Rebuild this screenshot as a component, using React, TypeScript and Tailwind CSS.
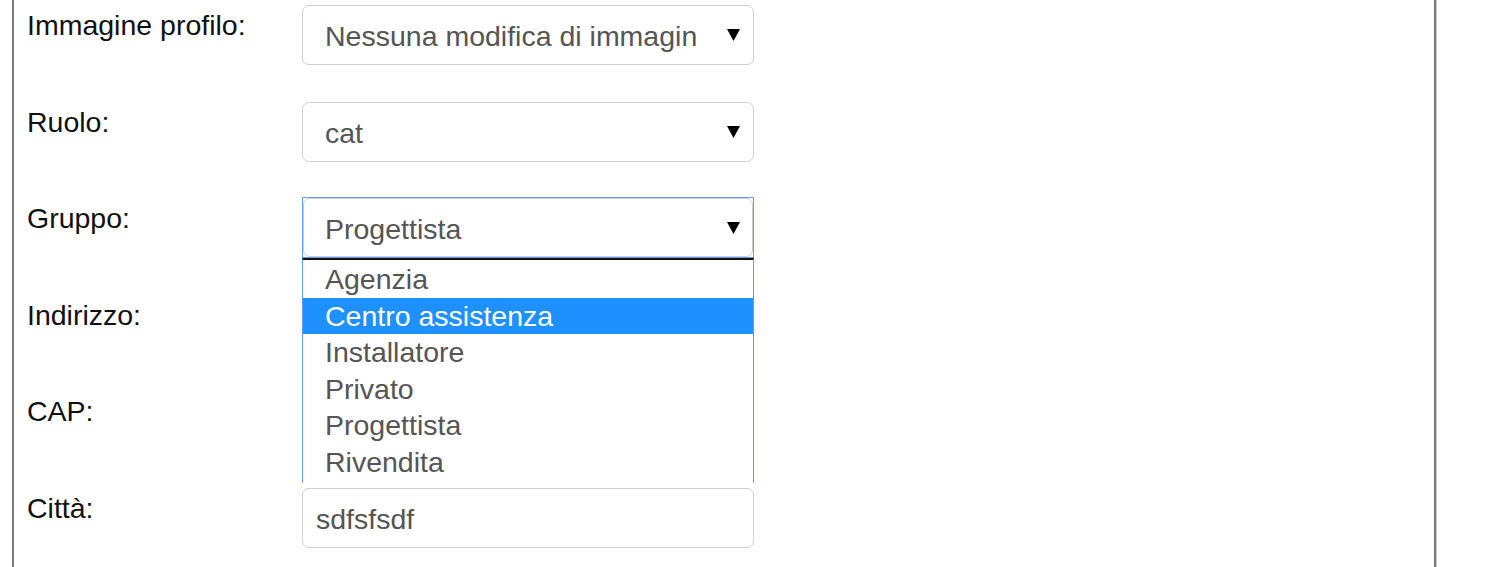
import { useState } from "react";

const font = { fontFamily: '"Liberation Sans", Arial, sans-serif' };

const gruppi = ["Agenzia", "Centro assistenza", "Installatore", "Privato", "Progettista", "Rivendita"];

function Caret() {
  return (
    <svg width="13" height="12" viewBox="0 0 13 12" className="shrink-0">
      <path d="M0 0 L13 0 L6.5 12 Z" fill="#000" />
    </svg>
  );
}

function SelectBox({ value }: { value: string }) {
  return (
    <div className="flex h-[60px] w-[452px] items-center rounded-[7px] border border-[#cfcfcf] bg-white pl-[22px] pr-[13px] pt-[3px] text-[28.5px] text-[#555]">
      <span className="w-[372px] overflow-hidden whitespace-nowrap">{value}</span>
      <span className="ml-auto pb-[3px]">
        <Caret />
      </span>
    </div>
  );
}

function TextBox({ value }: { value?: string }) {
  return (
    <div className="flex h-[60px] w-[452px] items-center rounded-[7px] border border-[#cfcfcf] bg-white px-[13px] pt-[3px] text-[28.5px] text-[#555]">
      {value}
    </div>
  );
}

function Row({ label, children }: { label: string; children: React.ReactNode }) {
  return (
    <div className="flex h-[96.6px] items-start">
      <label className="w-[288px] pl-[13px] text-[28.5px] leading-[40px] text-[#111]">{label}</label>
      <div className="relative">{children}</div>
    </div>
  );
}

export default function App() {
  const [hover] = useState("Centro assistenza");

  return (
    <div className="min-h-[567px] bg-white" style={font}>
      <div className="ml-[12px] h-[567px] w-[1424px] overflow-hidden border-x-2 border-[#7a7a7a] pt-[5px] shadow-[1px_0_0_#cdcdcd]">
        <Row label="Immagine profilo:">
          <SelectBox value="Nessuna modifica di immagine" />
        </Row>
        <Row label="Ruolo:">
          <SelectBox value="cat" />
        </Row>
        <Row label="Gruppo:">
          <div className="-mt-[1px] h-[61px] w-[452px] border border-[#5f9cf2]">
            <div className="flex h-full w-full items-center justify-between rounded-[7px] border border-[#cfcfcf] bg-white pl-[21px] pr-[12px] pt-[3px] text-[28.5px] text-[#555]">
              <span>Progettista</span>
              <span className="pb-[3px]">
                <Caret />
              </span>
            </div>
          </div>
          <div className="absolute left-0 top-[60px] z-10 h-[225px] w-[452px] overflow-hidden border-x border-t-2 border-[#5f9cf2] border-t-[#111] bg-white pt-[1px]">
            {gruppi.map((g) => (
              <div
                key={g}
                className={
                  g === hover
                    ? "flex h-[36.6px] items-center bg-[#1e90ff] pl-[22px] text-[28.5px] text-white"
                    : "flex h-[36.6px] items-center pl-[22px] text-[28.5px] text-[#555]"
                }
              >
                {g}
              </div>
            ))}
          </div>
        </Row>
        <Row label="Indirizzo:">
          <TextBox />
        </Row>
        <Row label="CAP:">
          <TextBox />
        </Row>
        <Row label="Città:">
          <TextBox value="sdfsfsdf" />
        </Row>
      </div>
    </div>
  );
}
